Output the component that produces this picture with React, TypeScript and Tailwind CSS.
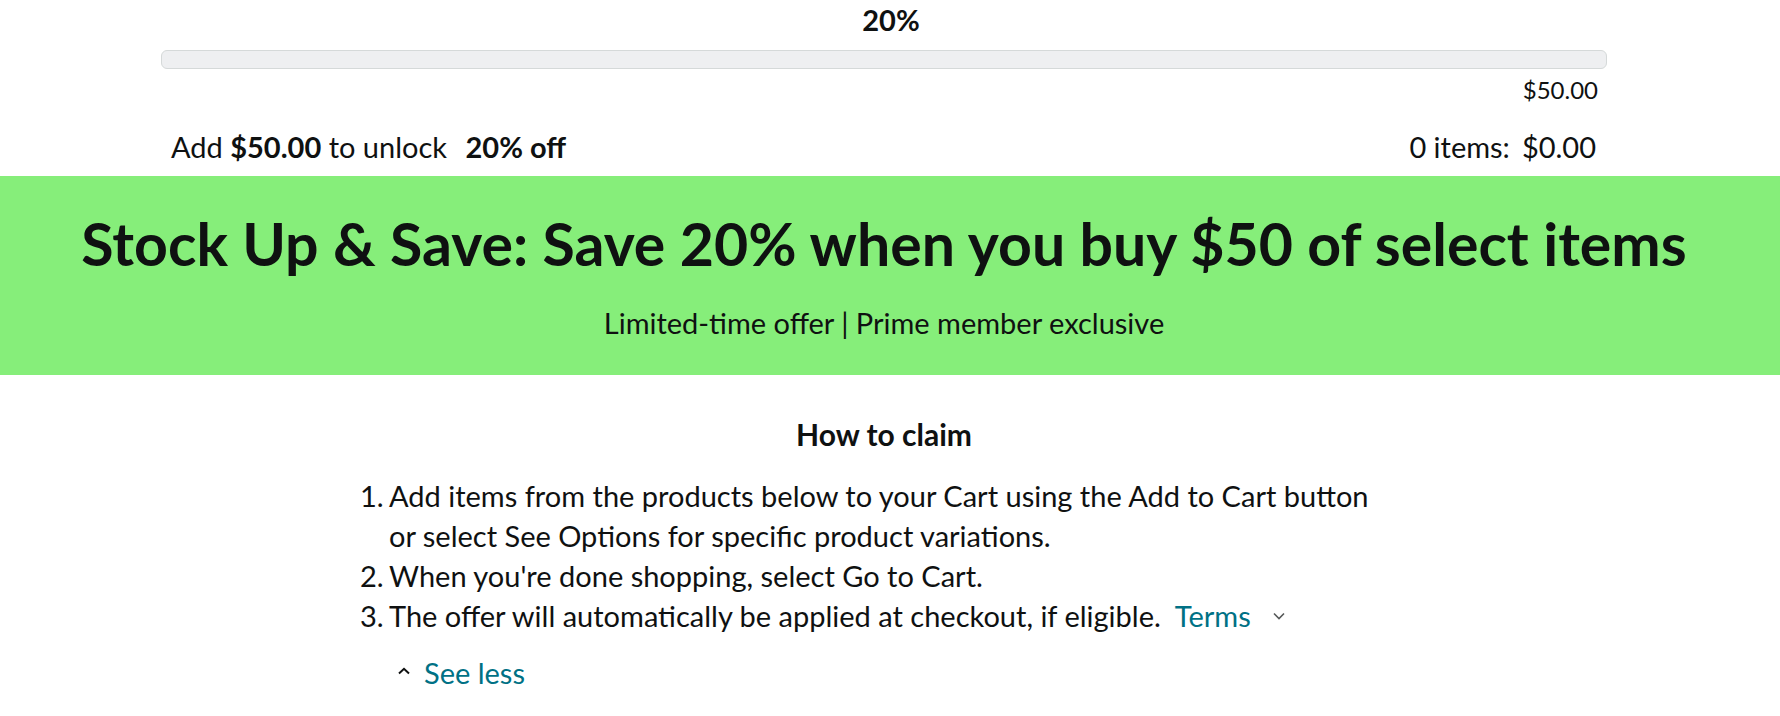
import React from "react";

export default function App() {
  return (
    <div className="w-[1780px] bg-white text-[#0f1111]" style={{ fontFamily: "Lato, 'Noto Sans', sans-serif" }}>
      {/* top progress section */}
      <div className="w-[1768px] h-[176px] px-[161px]">
        <div className="pt-[5px] text-center text-[29px] leading-[30px] font-bold pl-[14px]">20%</div>
        <div className="mt-[15px] h-[19px] rounded-[6px] border border-[#d5d9d9] bg-[#eeeff1]" />
        <div className="mt-[6px] flex justify-end pr-[9px] text-[24px] leading-[30px]">$50.00</div>
        <div className="mt-[27px] flex items-center justify-between pl-[10px] pr-[11px] text-[29px] leading-[30px]">
          <div>
            Add <span className="font-bold">$50.00</span> to unlock{" "}
            <span className="ml-[11px] font-bold">20% off</span>
          </div>
          <div>
            0 items:<span className="ml-[12px]">$0.00</span>
          </div>
        </div>
      </div>

      {/* green banner */}
      <div className="h-[199px] bg-[#86ee7a] pr-[12px] pt-[33px] text-center">
        <div className="text-[59px] leading-[70px] font-bold">
          Stock Up &amp; Save: Save 20% when you buy $50 of select items
        </div>
        <div className="mt-[29px] text-[29px] leading-[30px]">Limited-time offer | Prime member exclusive</div>
      </div>

      {/* how to claim */}
      <div className="w-[1768px] pb-[20px]">
        <div className="mt-[43px] text-center text-[30px] leading-[32px] font-bold">How to claim</div>
        <div className="mt-[26px] ml-[360px] text-[29px] leading-[40px]">
          <div className="flex">
            <span className="w-[29px] shrink-0">1.</span>
            <span>
              Add items from the products below to your Cart using the Add to Cart button
              <br />
              or select See Options for specific product variations.
            </span>
          </div>
          <div className="flex">
            <span className="w-[29px] shrink-0">2.</span>
            <span>When you're done shopping, select Go to Cart.</span>
          </div>
          <div className="flex items-center">
            <span className="w-[29px] shrink-0">3.</span>
            <span>The offer will automatically be applied at checkout, if eligible.</span>
            <span className="ml-[14px] text-[#007185]">Terms</span>
            <svg className="ml-[22px]" width="12" height="8" viewBox="0 0 12 8" fill="none">
              <path d="M1 1.5 L6 6.5 L11 1.5" stroke="#565959" strokeWidth="1.6" />
            </svg>
          </div>
          <div className="mt-[17px] ml-[38px] flex items-center">
            <svg width="12" height="8" viewBox="0 0 12 8" fill="none" className="mt-[-4px]">
              <path d="M1 6.5 L6 1.8 L11 6.5" stroke="#0f1111" strokeWidth="2" />
            </svg>
            <span className="ml-[14px] text-[#007185]">See less</span>
          </div>
        </div>
      </div>
    </div>
  );
}
